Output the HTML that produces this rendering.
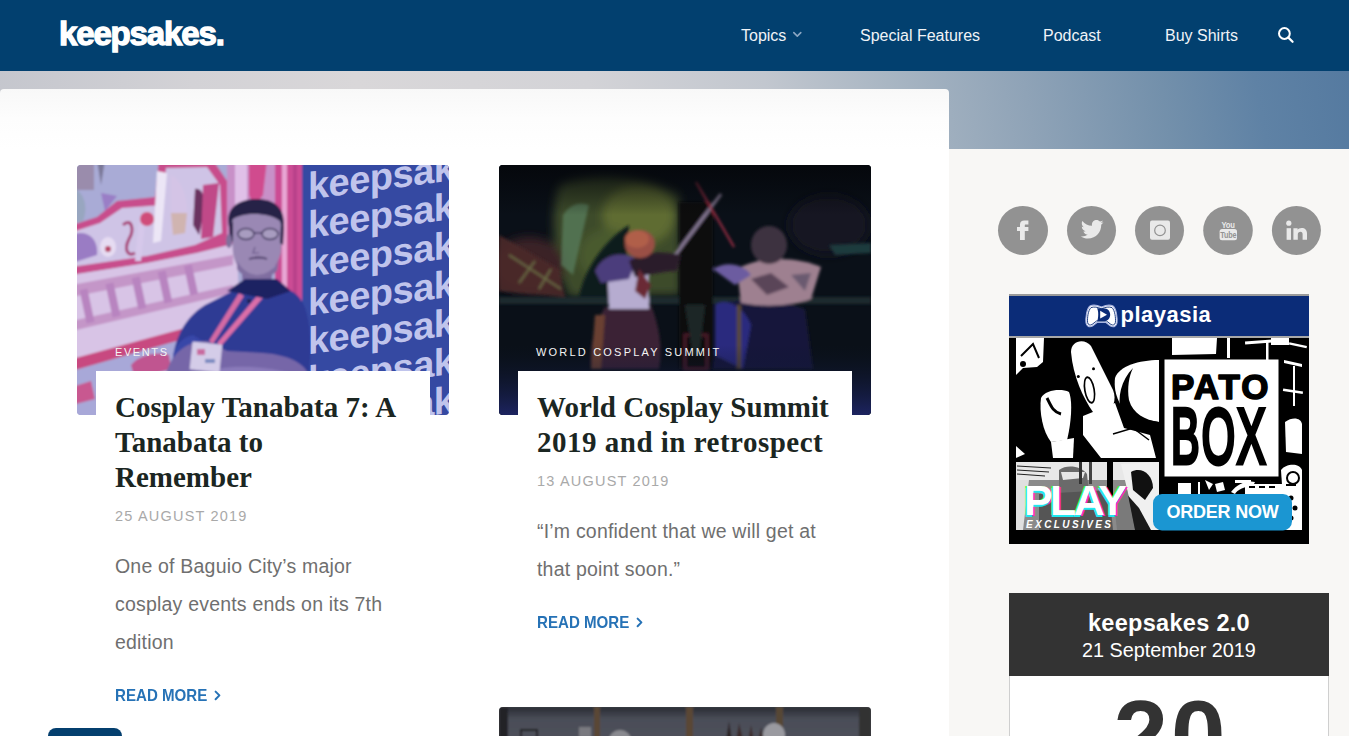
<!DOCTYPE html>
<html><head><meta charset="utf-8">
<style>
*{margin:0;padding:0;box-sizing:border-box}
html,body{width:1349px;height:736px;overflow:hidden;background:#f8f7f5;font-family:"Liberation Sans",sans-serif;position:relative}
.abs{position:absolute}
#hdr{position:absolute;left:0;top:0;width:1349px;height:71px;background:#02406f}
#logo{position:absolute;left:59px;top:14px;color:#fff;font-weight:bold;font-size:33px;letter-spacing:-1.15px;line-height:40px;white-space:nowrap;-webkit-text-stroke:1.3px #fff}
.nav{position:absolute;top:26px;color:#f0f3f7;font-size:16px;line-height:20px;white-space:nowrap}
#hero{position:absolute;left:0;top:71px;width:1349px;height:78px;background:linear-gradient(80deg,#c4c6cd 0%,#d3d2d6 15%,#d9d7d9 27%,#d3d3d7 44%,#c2c7cf 57%,#a9b6c3 66%,#8fa3b7 76%,#7390ab 86%,#5f82a5 93%,#557aa0 100%)}
#main{position:absolute;left:0;top:89px;width:949px;height:700px;background:linear-gradient(#f8f8f8,#fdfdfd 30px,#fff 60px);border-radius:4px 4px 0 0}
.img{position:absolute;top:165px;width:372px;height:250px;border-radius:4px;overflow:hidden}
.tbox{position:absolute;top:371px;width:334px;height:60px;background:#fff}
.lbl{position:absolute;top:345px;color:#f4f4f4;font-size:11px;letter-spacing:2.2px;line-height:14px;white-space:nowrap}
.title{position:absolute;color:#1b2622;font-family:"Liberation Serif",serif;font-weight:bold;font-size:29px;line-height:35px;white-space:nowrap}
.date{position:absolute;color:#a9a9a9;font-size:14.5px;letter-spacing:1.2px;line-height:18px;white-space:nowrap}
.exc{position:absolute;color:#6f6f6f;font-size:19.5px;letter-spacing:0.2px;line-height:38px;white-space:nowrap}
.more{position:absolute;color:#2672b6;font-weight:bold;font-size:16.5px;letter-spacing:0px;transform:scaleX(0.915);transform-origin:0 0;line-height:20px;white-space:nowrap}
.soc{position:absolute;top:206px;width:49px;height:49px;border-radius:50%;background:#949494}
</style></head><body>
<div id="hdr">
  <div id="logo">keepsakes.</div>
  <div class="nav" style="left:741px">Topics</div>
  <div class="nav" style="left:860px">Special Features</div>
  <div class="nav" style="left:1043px">Podcast</div>
  <div class="nav" style="left:1165px">Buy Shirts</div>
  <svg class="abs" style="left:0;top:0" width="1349" height="71">
    <polyline points="793.8,32.6 797.3,36.1 800.8,32.6" fill="none" stroke="#8ba6c2" stroke-width="1.6" stroke-linecap="round" stroke-linejoin="round"/>
    <circle cx="1284.4" cy="33.5" r="5.4" fill="none" stroke="#fff" stroke-width="2"/>
    <line x1="1288.4" y1="37.6" x2="1292.6" y2="41.8" stroke="#fff" stroke-width="2.2" stroke-linecap="round"/>
  </svg>
</div>
<div id="hero"></div>
<div id="main"></div>

<!-- card 1 -->
<div class="img" style="left:77px;background:#9a9ccb">
<svg width="372" height="250" viewBox="0 0 372 250">
  <defs>
    <filter id="bl1" x="-5%" y="-5%" width="110%" height="110%"><feGaussianBlur stdDeviation="1.1"/></filter>
  </defs>
  <g filter="url(#bl1)">
  <rect x="-5" y="-5" width="382" height="260" fill="#a9abd6"/>
  <rect x="-5" y="-5" width="22" height="30" fill="#9a8cac"/>
  <path d="M20,-5 L28,-5 L24,20 Z" fill="#7a7898"/>
  <path d="M24,28 L40,31 L28,46 Z" fill="#9a7ec6"/>
  <path d="M-5,22 C6,26 12,40 6,56 L-5,58 Z" fill="#98a6c0"/>
  <!-- red outline of cosplay logo -->
  <path d="M-5,60 L20,52 L40,36 L78,32 L82,-5 L136,-5 L150,16 L152,70 L160,78 L120,88 L70,98 L-5,110 Z" fill="#c84e8c"/>
  <!-- inner -->
  <path d="M-5,67 L23,58 L45,43 L85,40 L89,3 L130,2 L143,20 L145,68 L118,80 L70,91 L-5,102 Z" fill="#cfc4e6"/>
  <path d="M-5,70 C8,64 22,72 20,90 L-5,98 Z" fill="#9a7cc4"/>
  <ellipse cx="31" cy="82" rx="8" ry="10" fill="#e6dcf2"/>
  <circle cx="31" cy="84" r="3" fill="#b84468"/>
  <path d="M46,60 C54,52 58,64 52,74 C46,86 52,92 58,88" fill="none" stroke="#a84478" stroke-width="3"/>
  <path d="M62,56 L68,58 L64,96 L58,96 Z" fill="#d6c8ea"/>
  <circle cx="70" cy="54" r="7" fill="#d04e7a"/>
  <path d="M80,6 L90,8 L84,76 L76,78 Z" fill="#ece6f6"/>
  <path d="M94,10 C108,16 114,44 108,66 L94,68 Z" fill="#d4c4e6"/>
  <path d="M94,48 L110,48 L108,68 L96,70 Z" fill="#d0b4b0"/>
  <path d="M118,24 C126,22 130,36 126,52 L122,70 L116,60 Z" fill="#6a3060"/>
  <path d="M126,20 L142,18 L136,72 L124,74 Z" fill="#c04888"/>
  <!-- tanabata block -->
  <path d="M-5,110 L70,98 L120,88 L160,78 L162,140 L110,164 L-5,196 Z" fill="#d8c4e6"/>
  <path d="M-5,120 L156,90 L156,100 L-5,132 Z" fill="#c496c8"/>
  <path d="M-5,156 L156,120 L156,128 L-5,166 Z" fill="#c496c8"/>
  <rect x="6" y="124" width="8" height="34" fill="#b884c0" transform="rotate(-12 10 141)"/>
  <rect x="32" y="118" width="8" height="34" fill="#b884c0" transform="rotate(-12 36 135)"/>
  <rect x="58" y="112" width="8" height="32" fill="#b884c0" transform="rotate(-12 62 128)"/>
  <rect x="84" y="106" width="8" height="32" fill="#b884c0" transform="rotate(-12 88 122)"/>
  <rect x="110" y="100" width="8" height="30" fill="#b884c0" transform="rotate(-12 114 115)"/>
  <!-- red line under tanabata -->
  <path d="M-5,194 L112,162 L114,172 L-5,206 Z" fill="#c84a80"/>
  <!-- lower left -->
  <path d="M-5,206 L114,172 L100,255 L-5,255 Z" fill="#a8a8d8"/>
  <path d="M-5,222 L14,216 L18,234 L-5,240 Z" fill="#c85890"/>
  <path d="M30,214 L44,210 L46,226 L32,230 Z" fill="#c0609a"/>
  <path d="M54,200 C62,190 80,186 92,190 L94,204 L58,214 Z" fill="#c05490"/>
  <!-- pink stripe area -->
  <rect x="150" y="-5" width="50" height="80" fill="#c890c8"/>
  <rect x="158" y="-5" width="12" height="50" fill="#e0c0e8"/>
  <path d="M172,-5 L190,-5 L186,30 C180,40 172,36 172,28 Z" fill="#d04c8e"/>
  <rect x="198" y="-5" width="28" height="175" fill="#cc4c94"/>
  <rect x="205" y="-5" width="5" height="175" fill="#e8a6d4"/>
  <rect x="216" y="-5" width="4" height="175" fill="#b8428a"/>
  <!-- blue banner -->
  <rect x="225" y="-5" width="152" height="260" fill="#3449a2"/>
  <!-- man body -->
  <path d="M92,255 L96,192 C100,166 112,150 128,140 L156,126 L188,122 L214,126 C232,134 236,168 232,206 L234,255 Z" fill="#2d3a94"/>
  <path d="M96,200 C94,184 104,172 116,170 L126,176 L120,204 Z" fill="#3846a8"/>
  <!-- crossed arms -->
  <path d="M88,214 C92,190 108,176 130,176 L150,186 L186,188 C214,190 230,200 232,212 L232,255 L88,255 Z" fill="#7666a8"/>
  <path d="M132,206 C160,198 200,202 232,214 L232,236 C200,226 166,224 132,230 Z" fill="#8a7aba"/>
  <!-- lanyard -->
  <path d="M186,124 L140,178 L144,181 L191,127 Z" fill="#dc6ea8"/>
  <path d="M162,128 L132,176 L136,179 L167,131 Z" fill="#d46aa4"/>
  <rect x="114" y="178" width="30" height="28" fill="#d4cce8" transform="rotate(6 129 192)"/>
  <rect x="120" y="184" width="8" height="6" fill="#c86aa0"/>
  <rect x="128" y="194" width="10" height="4" fill="#7a8ac0"/>
  <!-- collar/neck -->
  <path d="M164,98 L196,98 L194,122 L166,122 Z" fill="#7c6aa0"/>
  <path d="M150,126 L168,114 L200,114 L214,126 L190,134 Z" fill="#1e2462"/>
  <circle cx="172" cy="136" r="2" fill="#1a1a40"/>
  <!-- head -->
  <path d="M154,58 C152,42 164,36 180,36 C198,36 208,46 206,62 L204,88 C200,102 192,110 180,110 C166,110 158,102 156,88 Z" fill="#9a88b4"/>
  <path d="M152,62 C148,44 160,34 180,34 C200,34 210,46 206,66 L203,56 C194,48 168,46 156,54 Z" fill="#262046"/>
  <path d="M152,60 L156,56 L156,76 L153,78 Z" fill="#2a2248"/>
  <path d="M204,58 L207,62 L206,80 L203,78 Z" fill="#2a2248"/>
  <ellipse cx="152" cy="76" rx="3" ry="7" fill="#80709c"/>
  <ellipse cx="169" cy="69" rx="8" ry="5.5" fill="#a89cc0" stroke="#3a3058" stroke-width="1.3"/>
  <ellipse cx="193" cy="69" rx="8" ry="5.5" fill="#a89cc0" stroke="#3a3058" stroke-width="1.3"/>
  <path d="M177,68 L185,68" stroke="#3a3058" stroke-width="1.2"/>
  <path d="M178,82 L176,88 L182,88" stroke="#6a5888" stroke-width="1.2" fill="none"/>
  <path d="M172,94 C178,92 186,92 190,94" stroke="#4a3a66" stroke-width="1.8" fill="none"/>
  <path d="M160,96 C166,106 174,110 180,110 C190,110 198,104 202,94 L200,106 C194,112 186,114 180,114 C172,114 164,110 160,104 Z" fill="#806ea0"/>
  </g>
  <!-- keepsakes text -->
  <g transform="skewY(-7.5)" font-family="Liberation Sans" font-weight="bold" font-size="38" fill="#c0c4ec" letter-spacing="-0.5">
    <text x="231" y="26">keepsakes</text>
    <text x="231" y="64.8">keepsakes</text>
    <text x="231" y="103.5">keepsakes</text>
    <text x="231" y="142.2">keepsakes</text>
    <text x="231" y="180.9">keepsakes</text>
    <text x="231" y="219.6">keepsakes</text>
    <text x="231" y="258.3">keepsakes</text>
    <text x="231" y="297">keepsakes</text>
  </g>
</svg></div>
<div class="tbox" style="left:96px"></div>
<div class="lbl" style="left:115px;letter-spacing:1.6px">EVENTS</div>
<div class="title" style="left:115px;top:390px">Cosplay Tanabata 7: A<br>Tanabata to<br>Remember</div>
<div class="date" style="left:115px;top:507px">25 AUGUST 2019</div>
<div class="exc" style="left:115px;top:547px">One of Baguio City’s major<br>cosplay events ends on its 7th<br>edition</div>
<div class="more" style="left:115px;top:685px">READ MORE</div>
<svg class="abs" style="left:210px;top:686px" width="16" height="18"><polyline points="5.6,5.6 9.4,9.4 5.6,13.2" fill="none" stroke="#2672b6" stroke-width="2" stroke-linecap="round" stroke-linejoin="round"/></svg>

<!-- card 2 -->
<div class="img" style="left:499px;background:#0c1220">
<svg width="372" height="250" viewBox="0 0 372 250">
  <defs>
    <filter id="bl2" x="-5%" y="-5%" width="110%" height="110%"><feGaussianBlur stdDeviation="1.4"/></filter>
    <filter id="bl2b" x="-20%" y="-20%" width="140%" height="140%"><feGaussianBlur stdDeviation="5"/></filter>
    <linearGradient id="g2ov" x1="0" y1="0" x2="0" y2="1">
      <stop offset="0" stop-color="#04060a" stop-opacity="0.85"/>
      <stop offset="0.2" stop-color="#04060a" stop-opacity="0"/>
      <stop offset="0.72" stop-color="#0b1426" stop-opacity="0"/>
      <stop offset="1" stop-color="#1d2460" stop-opacity="1"/>
    </linearGradient>
  </defs>
  <rect width="372" height="250" fill="#0a1018"/>
  <g filter="url(#bl2b)">
    <path d="M60,20 C90,5 150,10 180,30 L182,130 L70,132 C55,100 50,50 60,20 Z" fill="#3e4c2a"/>
    <ellipse cx="140" cy="50" rx="36" ry="30" fill="#5f6c30"/>
    <ellipse cx="110" cy="90" rx="30" ry="26" fill="#4a5a2e"/>
    <ellipse cx="30" cy="100" rx="36" ry="28" fill="#3a2228"/>
    <ellipse cx="330" cy="60" rx="40" ry="30" fill="#141420"/>
  </g>
  <g filter="url(#bl2)">
    <path d="M64,50 C70,40 80,36 90,40 L74,110 L62,100 Z" fill="#5a8060" opacity="0.7"/>
    <path d="M80,132 C86,100 110,72 130,60 L124,132 Z" fill="#111a1c"/>
    <path d="M0,70 L60,104 L66,132 L0,126 Z" fill="#4a2a2a" opacity="0.9"/>
    <path d="M10,90 L62,124 M20,118 L36,96 M40,124 L52,104" stroke="#6a6a44" stroke-width="2"/>
    <rect x="0" y="132" width="372" height="7" fill="#1c2c2e"/>
    <!-- dark pillar -->
    <rect x="180" y="37" width="34" height="167" fill="#08090e"/>
    <path d="M186,170 L208,170 L208,204 L186,204 Z" fill="none" stroke="#4a1a26" stroke-width="3"/>
    <path d="M186,140 L206,140 L200,190 L194,190 Z" fill="#1e2628"/>
    <!-- swords -->
    <line x1="176" y1="90" x2="222" y2="29" stroke="#8a7c98" stroke-width="3"/>
    <line x1="197" y1="17" x2="235" y2="82" stroke="#b03048" stroke-width="1.8"/>
    <!-- cosplayer 1 -->
    <path d="M92,204 C90,180 96,160 106,142 L152,140 C160,160 164,184 160,204 Z" fill="#3a2234"/>
    <path d="M96,150 L106,150 L102,204 L92,204 Z" fill="#6a4030"/>
    <path d="M108,98 C118,92 140,94 150,104 L150,144 L110,144 Z" fill="#b6acd0"/>
    <path d="M96,106 C104,88 124,86 138,94 L130,114 L102,118 Z" fill="#4c3c7c"/>
    <path d="M130,96 C145,86 165,86 182,90 L178,106 C160,106 145,112 136,112 Z" fill="#2a1a2c"/>
    <path d="M140,104 L152,120 L146,134 L136,126 Z" fill="#6a2a34"/>
    <ellipse cx="141" cy="79" rx="15" ry="14" fill="#9a5044"/>
    <ellipse cx="138" cy="74" rx="12" ry="9" fill="#b05e4a"/>
    <!-- cosplayer 2 -->
    <path d="M214,204 L220,140 C236,132 280,134 306,144 L314,204 Z" fill="#14163a"/>
    <path d="M216,140 C226,132 244,140 252,160 L244,204 L216,190 Z" fill="#2c2c7e"/>
    <path d="M238,104 C262,90 300,92 322,102 L312,134 C290,142 262,142 242,138 Z" fill="#9e8090"/>
    <path d="M252,114 L272,108 L290,122 L268,130 Z" fill="#5a4458"/>
    <path d="M292,110 L312,108 L306,126 Z" fill="#6a5a70"/>
    <path d="M214,104 C226,96 244,98 252,110 L236,120 Z" fill="#6c5ca0"/>
    <ellipse cx="270" cy="80" rx="18" ry="19" fill="#3e3240"/>
    <rect x="238" y="140" width="4" height="64" fill="#5a4a30"/>
    <path d="M330,80 L372,78 L372,88 L336,90 Z" fill="#1e3a3e"/>
  </g>
  <rect width="372" height="250" fill="url(#g2ov)"/>
</svg></div>
<div class="tbox" style="left:518px"></div>
<div class="lbl" style="left:536px">WORLD COSPLAY SUMMIT</div>
<div class="title" style="left:537px;top:390px">World Cosplay Summit<br><span style="letter-spacing:0.5px">2019 and in retrospect</span></div>
<div class="date" style="left:537px;top:472px">13 AUGUST 2019</div>
<div class="exc" style="left:537px;top:512px">“I’m confident that we will get at<br>that point soon.”</div>
<div class="more" style="left:537px;top:612px">READ MORE</div>
<svg class="abs" style="left:632px;top:613px" width="16" height="18"><polyline points="5.6,5.6 9.4,9.4 5.6,13.2" fill="none" stroke="#2672b6" stroke-width="2" stroke-linecap="round" stroke-linejoin="round"/></svg>

<div class="img" style="left:499px;top:707px;background:#4a4c56">
<svg width="372" height="40" viewBox="0 0 372 40">
  <defs><filter id="bl3"><feGaussianBlur stdDeviation="1"/></filter>
  <linearGradient id="g3" x1="0" y1="0" x2="0" y2="1"><stop offset="0" stop-color="#2a2c34"/><stop offset="0.3" stop-color="#4a4d58"/><stop offset="1" stop-color="#50525c"/></linearGradient></defs>
  <g filter="url(#bl3)">
  <rect width="372" height="40" fill="url(#g3)"/>
  <rect x="0" y="0" width="9" height="40" fill="#242426"/>
  <rect x="95" y="0" width="6" height="40" fill="#5a4636"/>
  <rect x="187" y="0" width="7" height="40" fill="#5a4636"/>
  <rect x="277" y="0" width="7" height="40" fill="#564634"/>
  <rect x="360" y="0" width="12" height="40" fill="#303032"/>
  <rect x="22" y="23" width="16" height="12" fill="none" stroke="#1a1a1a" stroke-width="2"/>
  <rect x="80" y="20" width="12" height="10" fill="#7a7a80"/>
  <ellipse cx="121" cy="33" rx="11" ry="10" fill="#8a8a90"/>
  <ellipse cx="138" cy="40" rx="10" ry="7" fill="#141416"/>
  <ellipse cx="76" cy="40" rx="8" ry="5" fill="#7a5060"/>
  <ellipse cx="204" cy="40" rx="12" ry="7" fill="#9a9070"/>
  <path d="M226,40 L230,14 L234,40 Z" fill="#2a2224"/>
  <path d="M236,40 L240,16 L246,40 Z" fill="#3a2a2c"/>
  <path d="M248,40 L252,18 L256,40 Z" fill="#3a2a2c"/>
  <path d="M258,40 L262,20 L266,40 Z" fill="#3a2a2c"/>
  <ellipse cx="275" cy="28" rx="11" ry="12" fill="#9a9aa0"/>
  <rect x="338" y="32" width="16" height="8" fill="#1e2024"/>
  </g>
</svg></div>
<div class="abs" style="left:48px;top:728px;width:74px;height:20px;background:#043f6e;border-radius:8px"></div>

<!-- sidebar -->
<svg class="abs" style="left:990px;top:198px" width="340" height="64">
  <g fill="#929292">
    <ellipse cx="33" cy="32.4" rx="25" ry="24.5"/>
    <ellipse cx="101.5" cy="32.4" rx="24.5" ry="24.5"/>
    <ellipse cx="169.5" cy="32.4" rx="24.5" ry="24.5"/>
    <ellipse cx="238" cy="32.4" rx="24.8" ry="24.5"/>
    <ellipse cx="306.4" cy="32.4" rx="24.5" ry="24.5"/>
  </g>
  <g fill="#e9e9e9">
    <!-- facebook f -->
    <path d="M30,42 V33 H27 V29 H30 V26.5 C30,23.5 31.6,22.4 34.4,22.4 H38.4 V26.6 H35.6 C34.9,26.6 34.8,27 34.8,27.6 V29 H38.4 V33 H34.8 V42 Z"/>
    <!-- twitter bird -->
    <path d="M113.4,24.2 C112.6,24.6 111.7,24.8 110.8,24.9 C111.7,24.3 112.5,23.4 112.8,22.4 C111.9,22.9 111,23.3 110,23.5 C109.1,22.6 107.9,22 106.6,22 C104,22 101.9,24.1 101.9,26.7 C101.9,27.1 101.9,27.4 102,27.8 C98.1,27.6 94.7,25.7 92.4,22.9 C92,23.6 91.8,24.4 91.8,25.3 C91.8,26.9 92.6,28.4 93.9,29.2 C93.1,29.2 92.4,29 91.8,28.6 C91.8,30.9 93.4,32.8 95.5,33.3 C94.8,33.5 94.1,33.5 93.4,33.4 C94,35.3 95.7,36.6 97.8,36.6 C96.200,37.900 94.1,38.6 91.900,38.6 C91.5,38.6 91.1,38.6 90.7,38.5 C92.8,39.800 95.3,40.600 97.9,40.600 C106.5,40.600 111.200,33.500 111.200,27.300 L111.200,26.700 C112.100,26 112.900,25.200 113.400,24.200 Z"/>
    <!-- instagram -->
    <rect x="160" y="22.6" width="20" height="19.2" rx="2"/>
    <!-- youtube -->
    <text transform="translate(238,29.8) scale(0.85,1.1)" font-family="Liberation Sans" font-size="9" font-weight="bold" text-anchor="middle" letter-spacing="-0.3">You</text>
    <rect x="229.6" y="31" width="17.4" height="11.3" rx="2.5"/>
    <!-- linkedin -->
    <rect x="296.6" y="30.2" width="4.4" height="11.6"/>
    <circle cx="298.8" cy="25.2" r="2.6"/>
    <path d="M303.4,30.2 H307.6 V31.8 C308.4,30.6 309.8,29.9 311.6,29.9 C315,29.9 317,31.8 317,35.6 V41.8 H312.6 V36.4 C312.6,34.700 312,33.8 310.5,33.8 C308.9,33.8 307.8,34.8 307.8,36.6 V41.8 H303.4 Z"/>
  </g>
  <circle cx="170" cy="32.4" r="5.3" fill="none" stroke="#929292" stroke-width="1.2"/>
  <text transform="translate(238.3,40.3) scale(0.8,1.05)" font-family="Liberation Sans" font-size="9" font-weight="bold" fill="#929292" text-anchor="middle" letter-spacing="-0.2">Tube</text>
</svg>

<svg class="abs" style="left:1009px;top:294px" width="300" height="250" viewBox="0 0 300 250">
  <rect width="300" height="250" fill="#000"/>
  <rect width="300" height="2" fill="#9a9a9a"/>
  <rect y="2" width="300" height="40" fill="#0b2c78"/>
  <rect y="42" width="300" height="2" fill="#a8a8a8"/>
  <!-- playasia logo -->
  <path d="M81,12 C84,10.5 88,11 92.5,13 C97,11 101,10.5 104,12 C107.5,15 108.5,24 108,29 C107.5,32.5 104.5,33.5 101.5,32 L97,28.5 L88,28.5 L83.5,32 C80.5,33.5 77.5,32.5 77,29 C76.5,24 77.5,15 81,12 Z" fill="#fff" stroke="#a8b4e0" stroke-width="1.1"/>
  <path d="M82,13.6 C85,12.6 88.5,13 92.5,14.8 C96.5,13 100,12.6 103,13.6 C106,16.5 106.8,24 106.4,28.5 C106,31 104,31.5 102,30.5 L97.5,27 L87.5,27 L83,30.5 C81,31.5 79,31 78.6,28.5 C78.2,24 79,16.5 82,13.6 Z" fill="none" stroke="#0b2c78" stroke-width="0.9"/>
  <path d="M88,14.2 L94.5,14.2 C98.5,14.2 101.2,17 101.2,20.7 C101.2,24.4 98.5,27.3 94.5,27.3 L88,27.3 C89.5,25 89.8,16.5 88,14.2 Z" fill="#0b2c78"/>
  <path d="M91.2,16.8 L98,20.7 L91.2,24.6 Z" fill="#fff"/>
  <text x="111.5" y="28" font-family="Liberation Sans" font-weight="bold" font-size="22" fill="#fff" letter-spacing="0.5">playasia</text>
  <!-- art -->
  <g fill="#fff">
    <!-- top left panel -->
    <path d="M7,44 L35,44 L34,68 L28,73 L14,74 L7,81 Z"/>
    <!-- top strip panels -->
    <path d="M163,44 L208,44 L207,60 L163,61 Z"/>
    <rect x="236" y="46" width="40" height="3" transform="rotate(-4 256 47)"/>
    <rect x="262" y="44" width="18" height="7"/>
    <rect x="280" y="50" width="18" height="2.5" transform="rotate(12 289 51)"/>
    <rect x="218" y="44" width="3" height="20"/>
    <rect x="257" y="48" width="2.5" height="20"/>
    <!-- duck head -->
    <path d="M62,58 C62,46 76,44 82,52 L104,96 C108,106 104,116 96,120 L84,118 C74,104 64,82 62,58 Z"/>
    <!-- glove -->
    <path d="M32,104 C36,96 52,94 60,98 C64,108 62,130 58,146 L42,148 C34,138 30,118 32,104 Z"/>
    <path d="M42,148 L65,144 L64,164 L44,164 Z"/>
    <!-- shoulder -->
    <path d="M106,84 C110,72 130,66 150,66 L150,128 L126,124 C112,118 104,100 106,84 Z"/>
    <!-- lower body -->
    <path d="M74,122 L106,109 L115,134 L141,141 L147,164 L92,164 L74,141 Z"/>
    <path d="M7,152 L16,160 L7,164 Z"/>
    <!-- PATO BOX box -->
    <rect x="155.5" y="65.5" width="114" height="117"/>
    <!-- right side -->
    <path d="M275,66 L293,70 L293,73 L275,69 Z"/>
    <rect x="284" y="72" width="2" height="40"/>
    <rect x="274" y="96" width="20" height="2.5" transform="rotate(8 284 97)"/>
    <path d="M276,128 C284,122 292,124 293,130 L293,160 L277,158 Z"/>
    <path d="M272,176 C276,170 290,168 293,176 L293,236 L276,236 Z"/>
    <!-- lower strip (right) -->
    <rect x="169" y="189" width="13" height="11"/>
    <rect x="189" y="188" width="2" height="12"/>
    <path d="M196,186 L204,190 L200,196 Z"/>
    <path d="M206,190 L214,188 L216,196 L208,198 Z"/>
    <path d="M222,198 C228,190 238,186 246,188 L244,192 C236,192 228,196 226,200 Z"/>
    <rect x="236" y="190" width="38" height="10"/>
    <rect x="226" y="186" width="16" height="3"/>
    <!-- lower left panel top -->
  </g>
  <g fill="#000">
    <path d="M12,62 L24,50 L30,64" fill="none" stroke="#000" stroke-width="2"/>
    <circle cx="14" cy="70" r="3"/>
    <ellipse cx="80.5" cy="96" rx="5.5" ry="14" transform="rotate(-10 80.5 96)"/>
    <ellipse cx="80.5" cy="96" rx="3.8" ry="12" transform="rotate(-10 80.5 96)" fill="#fff"/>
    <circle cx="69.3" cy="82.6" r="1.5"/><circle cx="84.5" cy="74.7" r="1.5"/>
    <path d="M124,74 C112,86 108,104 112,118 C118,134 132,140 150,140 L150,128 C136,126 124,120 120,106 C118,94 120,82 124,74 Z"/>
    <path d="M38,104 C42,112 44,118 52,120" fill="none" stroke="#000" stroke-width="3"/>
    <path d="M104,140 L124,134 L140,146" fill="none" stroke="#000" stroke-width="1.5"/>
    <rect x="159.5" y="69.5" width="106" height="109" fill="#fff"/>
    <circle cx="284" cy="184" r="6" fill="none" stroke="#000" stroke-width="2"/>
    <circle cx="282" cy="204" r="2.5"/><circle cx="286" cy="214" r="2.5"/><circle cx="282" cy="224" r="2.5"/>
    <rect x="277" y="190" width="10" height="2"/>
    <rect x="240" y="192" width="6" height="2"/><rect x="250" y="192" width="6" height="2"/><rect x="260" y="192" width="6" height="2"/>
  </g>
  <!-- lower left art (gray/mixed) -->
  <path d="M7,168 L150,168 L150,236 L7,236 Z" fill="#8a8a8a"/>
  <path d="M7,168 L150,168 L150,186 L7,186 Z" fill="#e8e8e8"/>
  <path d="M8,172 L42,174 M8,176 L40,178 M8,180 L36,182" stroke="#222" stroke-width="1"/>
  <path d="M7,186 L20,186 L14,236 L7,236 Z" fill="#e0e0e0"/>
  <path d="M50,176 C58,170 72,172 78,180 L80,200 L50,200 Z" fill="#6a6a6a"/>
  <path d="M52,178 L76,178 L74,184 L54,186 Z" fill="#e6e6e6"/>
  <rect x="70" y="168" width="3" height="22" fill="#333"/>
  <rect x="80" y="168" width="3" height="22" fill="#444"/>
  <rect x="98" y="168" width="6" height="40" fill="#000"/>
  <path d="M112,170 L150,168 L150,236 L128,236 Z" fill="#f0f0f0"/>
  <path d="M122,178 C132,172 144,180 144,194 L136,206 L124,196 Z" fill="#111"/>
  <path d="M114,196 L130,214 L142,236 L120,236 Z" fill="#1a1a1a"/>
  <path d="M30,200 L100,196 L104,236 L30,236 Z" fill="#555"/>
  <path d="M104,200 L118,196 L126,236 L108,236 Z" fill="#7a7a7a"/>
  <text x="162" y="105" font-family="Liberation Sans" font-weight="bold" font-size="35" fill="#000" stroke="#000" stroke-width="1.5" stroke-linejoin="round" letter-spacing="2">PATO</text>
  <text transform="translate(162,169) scale(0.535,0.97)" font-family="Liberation Sans" font-size="80" fill="#000" stroke="#000" stroke-width="5" letter-spacing="4">BOX</text>
  <!-- PLAY -->
  <g font-family="Liberation Sans" font-weight="bold" font-size="43" letter-spacing="-2.6">
    <text x="16.5" y="222" fill="#ff20d0">PLAY</text>
    <text x="13.5" y="221" fill="#30ff30">PLAY</text>
    <text x="14" y="223" fill="#20e8f0">PLAY</text>
    <text x="15" y="221" fill="#fff">PLAY</text>
  </g>
  <text x="17" y="234" font-family="Liberation Sans" font-weight="bold" font-style="italic" font-size="10" fill="#fff" letter-spacing="2.4">EXCLUSIVES</text>
  <!-- order now -->
  <rect x="144" y="200" width="139" height="36.5" rx="9" fill="#1b96d2"/>
  <text x="213.5" y="223.8" font-family="Liberation Sans" font-weight="bold" font-size="18" fill="#fff" text-anchor="middle" letter-spacing="-0.2">ORDER NOW</text>
</svg>

<div class="abs" style="left:1009px;top:593px;width:320px;height:200px;background:#fff;border:1px solid #cfcfcf"></div>
<div class="abs" style="left:1009px;top:593px;width:320px;height:83px;background:#333"></div>
<div class="abs" style="left:1009px;top:608px;width:320px;text-align:center;color:#fff;font-weight:bold;font-size:23.5px;line-height:30px;letter-spacing:0.3px">keepsakes 2.0</div>
<div class="abs" style="left:1009px;top:638px;width:320px;text-align:center;color:#fff;font-size:19.8px;line-height:24px">21 September 2019</div>
<div class="abs" style="left:1011px;top:685px;width:320px;text-align:center;color:#333;font-weight:bold;font-size:98px;line-height:100px;letter-spacing:3px">20</div>
</body></html>
